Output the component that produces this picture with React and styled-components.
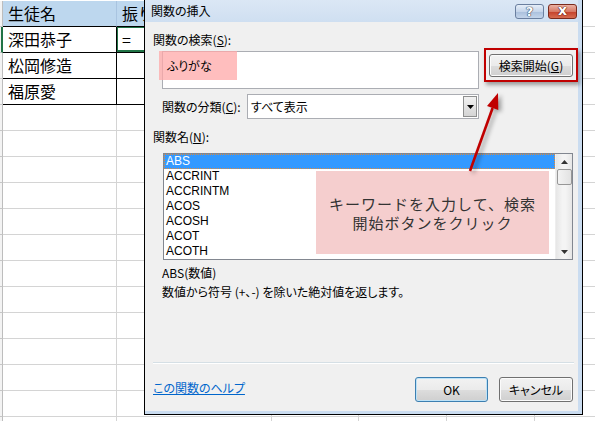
import React from "react";
import styled, { createGlobalStyle } from "styled-components";

const GlobalStyle = createGlobalStyle`
  html, body {
    margin: 0;
    padding: 0;
    background: #fff;
  }
  body {
    font-family: "Noto Sans CJK JP", "Noto Sans", sans-serif;
    color: #000;
  }
`;

const sheetRows = [
  ["生徒名", "振り"],
  ["深田恭子", "="],
  ["松岡修造", ""],
  ["福原愛", ""],
];

const functionNames = ["ABS", "ACCRINT", "ACCRINTM", "ACOS", "ACOSH", "ACOT", "ACOTH"];

function App() {
  const rows = [];
  for (let r = 0; r < 17; r++) {
    const data = sheetRows[r] || ["", ""];
    rows.push(
      <React.Fragment key={r}>
        <RowHead $active={r === 1} />
        <Cell $head={r === 0} $boxed={r >= 1 && r <= 3} $boxedBottom={r <= 3}>
          {data[0]}
        </Cell>
        <Cell $head={r === 0} $boxed={r >= 1 && r <= 3} $boxedBottom={r <= 3} $active={r === 1}>
          {data[1]}
        </Cell>
        <Cell />
        <Cell />
        <Cell />
        <Cell />
      </React.Fragment>
    );
  }

  return (
    <Page>
      <GlobalStyle />
      <Sheet>{rows}</Sheet>

      <Dialog>
        <TitleBar>
          <Title>関数の挿入</Title>
          <TitleButtons>
            <HelpButton>?</HelpButton>
            <CloseButton>x</CloseButton>
          </TitleButtons>
        </TitleBar>

        <Body>
          <Label>
            関数の検索(<u>S</u>):
          </Label>
          <SearchRow>
            <SearchBox>
              <Marker />
              <SearchText>ふりがな</SearchText>
            </SearchBox>
            <Highlight>
              <PushButton $w={84}>
                検索開始(<u>G</u>)
              </PushButton>
            </Highlight>
          </SearchRow>

          <CategoryRow>
            <CategoryLabel>
              関数の分類(<u>C</u>):
            </CategoryLabel>
            <Select>
              <SelectText>すべて表示</SelectText>
              <DropButton>
                <svg width="7" height="4" viewBox="0 0 7 4">
                  <path d="M0 0h7L3.5 4z" fill="#000" />
                </svg>
              </DropButton>
            </Select>
          </CategoryRow>

          <Label $top={10}>
            関数名(<u>N</u>):
          </Label>
          <ListBox>
            <ListItems>
              {functionNames.map((name, i) => (
                <ListItem key={name} $selected={i === 0}>
                  {name}
                </ListItem>
              ))}
            </ListItems>
            <ScrollBar>
              <svg width="7" height="4" viewBox="0 0 7 4">
                <path d="M3.5 0L7 4H0z" fill="#333" />
              </svg>
              <Thumb />
              <svg width="7" height="4" viewBox="0 0 7 4" style={{ marginTop: "auto" }}>
                <path d="M0 0h7L3.5 4z" fill="#333" />
              </svg>
            </ScrollBar>
          </ListBox>

          <Syntax>ABS(数値)</Syntax>
          <Description>数値から符号 (+、-) を除いた絶対値を返します。</Description>

          <Separator />

          <Footer>
            <HelpLink>この関数のヘルプ</HelpLink>
            <PushButton $w={73} $default>
              OK
            </PushButton>
            <PushButton $w={74}>キャンセル</PushButton>
          </Footer>

          <Callout>
            キーワードを入力して、検索
            <br />
            開始ボタンをクリック
          </Callout>

          <Arrow width="60" height="95" viewBox="0 0 60 95">
            <line x1="15" y1="86" x2="37.6" y2="23" stroke="#c00000" strokeWidth="2.6" />
            <path d="M43 8L43.3 25.1L32 21z" fill="#c00000" />
          </Arrow>
        </Body>
      </Dialog>
    </Page>
  );
}

export default App;

const Page = styled.div`
  position: relative;
  width: 595px;
  height: 421px;
  overflow: hidden;
  background: #fff;
`;

const Sheet = styled.div`
  display: grid;
  grid-template-columns: 3px 114px 155px 87px 88px 88px 88px;
  grid-auto-rows: 26px;
  margin-top: 1px;
`;

const RowHead = styled.div`
  box-sizing: border-box;
  background: #f3f3f3;
  border-bottom: 1px solid #c6c6c6;
  border-right: ${(p) => (p.$active ? "2px solid #217346" : "1px solid #bdbdbd")};
`;

const Cell = styled.div`
  position: relative;
  box-sizing: border-box;
  padding-left: 5px;
  font-size: 16px;
  line-height: 25px;
  white-space: nowrap;
  overflow: hidden;
  background: ${(p) => (p.$head ? "#bdd7ee" : "#fff")};
  border-right: 1px solid ${(p) => (p.$boxed ? "#000" : p.$head ? "#a9c4e0" : "#d4d4d4")};
  border-bottom: 1px solid ${(p) => (p.$boxedBottom ? "#000" : "#d4d4d4")};

  &::after {
    content: "";
    display: ${(p) => (p.$active ? "block" : "none")};
    position: absolute;
    left: -1px;
    top: -1px;
    right: 0;
    bottom: 0;
    border: 2px solid #217346;
  }
`;

const Dialog = styled.div`
  position: absolute;
  left: 144px;
  top: 0;
  width: 439px;
  height: 415px;
  box-sizing: border-box;
  border: 1px solid #000;
  border-top: none;
  padding: 0 4px 3px 0;
  background: #cadcf0;
  display: flex;
  flex-direction: column;
  font-feature-settings: "palt";
`;

const TitleBar = styled.div`
  height: 22px;
  flex-shrink: 0;
  display: flex;
  align-items: flex-start;
  padding-left: 6px;
  background: linear-gradient(#dbe7f5, #cfdff1);
`;

const Title = styled.div`
  font-size: 12px;
  line-height: 22px;
`;

const TitleButtons = styled.div`
  margin-left: auto;
  margin-right: 1px;
  margin-top: 4px;
  display: flex;
  gap: 4px;
`;

const CaptionButton = styled.div`
  width: 29px;
  height: 15px;
  box-sizing: border-box;
  border-radius: 3px;
  display: flex;
  align-items: center;
  justify-content: center;
  font-family: "DejaVu Sans", sans-serif;
  font-weight: bold;
  color: #fff;
  line-height: 1;
`;

const HelpButton = styled(CaptionButton)`
  border: 1px solid #6a7f9f;
  background: linear-gradient(#e6eef8 0%, #c5d5ea 50%, #a9bfdc 51%, #c3d4ea 100%);
  font-size: 13px;
  text-shadow: 0 0 1px #33445e, 0 0 1px #33445e, 0 0 1px #33445e;
`;

const CloseButton = styled(CaptionButton)`
  border: 1px solid #7a2a1c;
  background: linear-gradient(#eab1a4 0%, #d77a66 50%, #c4402a 51%, #d66c50 100%);
  font-size: 14px;
  padding-bottom: 3px;
  text-shadow: 0 0 1px #5a1a10, 0 0 1px #5a1a10, 0 0 1px #5a1a10;
`;

const Body = styled.div`
  position: relative;
  flex: 1;
  display: flex;
  flex-direction: column;
  padding-left: 8px;
  background: #f0f0f0;
  font-size: 12px;
`;

const Label = styled.div`
  margin-top: ${(p) => p.$top || 10}px;
  line-height: 16px;
  height: 16px;
`;

const SearchRow = styled.div`
  display: flex;
  align-items: flex-start;
`;

const SearchBox = styled.div`
  position: relative;
  margin: 3px 0 0 9px;
  width: 317px;
  height: 38px;
  box-sizing: border-box;
  border: 1px solid #abadb3;
  background: #fff;
  padding: 5px 0 0 4px;
`;

const Marker = styled.div`
  position: absolute;
  left: -4px;
  top: -1px;
  width: 78px;
  height: 29px;
  background: rgba(255, 168, 168, 0.75);
`;

const SearchText = styled.span`
  position: relative;
  line-height: 16px;
`;

const Highlight = styled.div`
  margin-left: 5px;
  border: 2px solid #c00000;
  padding: 4px 3px 3px 3px;
  box-shadow: 2px 3px 4px rgba(0, 0, 0, 0.35);
`;

const PushButton = styled.div`
  width: ${(p) => p.$w}px;
  height: 23px;
  box-sizing: border-box;
  border: 1px solid ${(p) => (p.$default ? "#3c7fb1" : "#707070")};
  border-radius: 3px;
  background: linear-gradient(#f2f2f2 0%, #ebebeb 50%, #dddddd 51%, #cfcfcf 100%);
  box-shadow: inset 0 0 0 1px ${(p) => (p.$default ? "#bde2f7" : "#fbfbfb")};
  display: flex;
  align-items: center;
  justify-content: center;
  font-size: 12px;
`;

const CategoryRow = styled.div`
  display: flex;
  align-items: center;
  margin-top: 5px;
  padding-left: 9px;
  height: 25px;
`;

const CategoryLabel = styled.div`
  width: 85px;
  line-height: 16px;
`;

const Select = styled.div`
  width: 232px;
  height: 25px;
  box-sizing: border-box;
  border: 1px solid #abadb3;
  background: #fff;
  display: flex;
  align-items: stretch;
`;

const SelectText = styled.div`
  flex: 1;
  padding-left: 3px;
  line-height: 23px;
`;

const DropButton = styled.div`
  width: 14px;
  margin: 1px;
  box-sizing: border-box;
  border: 1px solid #8e8f8f;
  background: linear-gradient(#f2f2f2, #d4d4d4);
  display: flex;
  align-items: center;
  justify-content: center;
`;

const ListBox = styled.div`
  margin: 8px 0 0 10px;
  width: 410px;
  height: 107px;
  box-sizing: border-box;
  border: 1px solid #828790;
  background: #fff;
  display: flex;
`;

const ListItems = styled.div`
  flex: 1;
  display: flex;
  flex-direction: column;
`;

const ListItem = styled.div`
  height: 15px;
  box-sizing: border-box;
  font-family: "Liberation Sans", Arial, sans-serif;
  font-size: 12px;
  line-height: 15px;
  padding-left: 2px;
  color: ${(p) => (p.$selected ? "#fff" : "#000")};
  background: ${(p) => (p.$selected ? "#3399ff" : "transparent")};
  outline: ${(p) => (p.$selected ? "1px dotted #e08a3a" : "none")};
  outline-offset: -1px;
`;

const ScrollBar = styled.div`
  width: 17px;
  box-sizing: border-box;
  background: linear-gradient(90deg, #e6e6e6, #f4f4f4 40%, #f4f4f4 60%, #e6e6e6);
  border-left: 1px solid #eeeeee;
  display: flex;
  flex-direction: column;
  align-items: center;
  padding: 6px 0 5px;
`;

const Thumb = styled.div`
  margin-top: 5px;
  width: 15px;
  height: 16px;
  box-sizing: border-box;
  border: 1px solid #979797;
  border-radius: 2px;
  background: linear-gradient(90deg, #f3f3f3, #e2e2e2);
`;

const Syntax = styled.div`
  margin: 5px 0 0 9px;
  line-height: 16px;
`;

const Description = styled.div`
  margin: 3px 0 0 9px;
  line-height: 16px;
`;

const Separator = styled.div`
  margin: 62px 4px 0 0;
  height: 1px;
  background: #d5dfe5;
  border-bottom: 1px solid #ffffff;
`;

const Footer = styled.div`
  margin-top: 13px;
  height: 25px;
  display: flex;
  align-items: center;
  gap: 11px;
  padding-right: 5px;

  & > :nth-child(2) {
    margin-left: auto;
  }
  & > div {
    height: 25px;
  }
`;

const HelpLink = styled.span`
  color: #0066cc;
  text-decoration: underline;
  line-height: 16px;
  margin-top: -4px;
`;

const Callout = styled.div`
  position: absolute;
  left: 171px;
  top: 149px;
  width: 233px;
  height: 83px;
  background: #f5cece;
  color: #333;
  font-size: 15px;
  font-feature-settings: normal;
  letter-spacing: 1px;
  line-height: 19px;
  display: flex;
  align-items: center;
  justify-content: center;
  text-align: center;
`;

const Arrow = styled.svg`
  position: absolute;
  left: 310px;
  top: 63px;
  overflow: visible;
  filter: drop-shadow(3px 2px 2px rgba(0, 0, 0, 0.35));
`;
